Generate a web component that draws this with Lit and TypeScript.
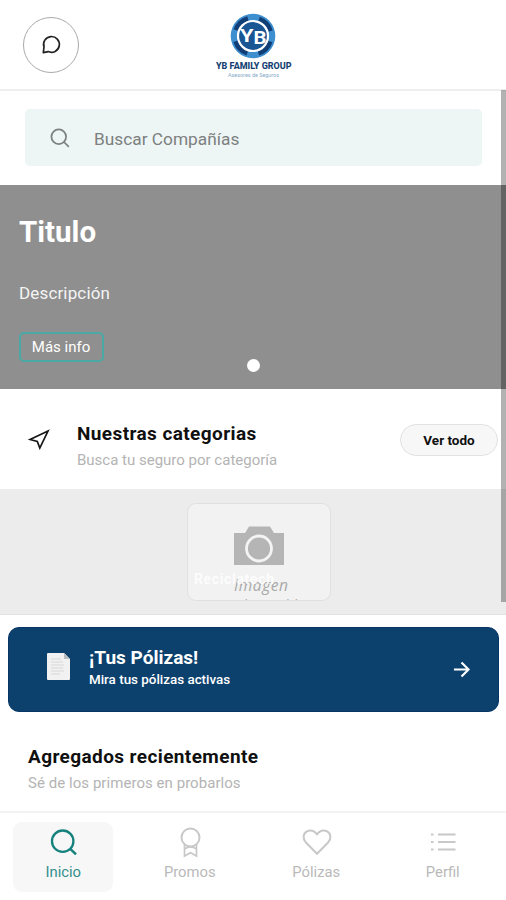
import { LitElement, html, css, svg } from "lit";
import { customElement, state } from "lit/decorators.js";
import { classMap } from "lit/directives/class-map.js";

const searchIcon = html`<svg viewBox="0 0 24 24" fill="none" stroke="currentColor" stroke-width="2.1">
  <circle cx="10.5" cy="10.5" r="8.8" /><path d="M16.8 16.8 L22.6 22.6" />
</svg>`;

const tabs = [
  { label: "Inicio", icon: svg`<circle cx="14.7" cy="14.2" r="10.7" stroke-width="2.3"/><path d="M22 21.700 L28 27.400" stroke-width="2.5"/>` },
  { label: "Promos", icon: svg`<circle cx="16.500" cy="10.500" r="9"/><path d="M10.500 18V29l6-3.200 6 3.200V18M10.500 22q6-4 12 0" stroke-width="1.700"/>` },
  { label: "Pólizas", icon: svg`<path d="M16 26.800 4.700 15.200C1.500 11.600 2.100 6.500 5.900 4.400 9.500 2.500 13.700 3.800 16 7.300 18.300 3.800 22.500 2.500 26.100 4.400 29.900 6.500 30.500 11.600 27.300 15.200Z"/>` },
  { label: "Perfil", icon: svg`<path d="M11 7.500h17.500M11 15h17.500M11 22.500h17.500" stroke-width="2"/><path d="M4 7.500h2.500M4 15h2.500M4 22.500h2.500" stroke-width="2"/>` },
];

@customElement("app-root")
export class AppRoot extends LitElement {
  @state() private active = "Inicio";

  static styles = css`
    :host {
      display: flex;
      flex-direction: column;
      position: relative;
      width: 506px;
      height: 900px;
      overflow: hidden;
      background: #fff;
      color: #101010;
      font-family: Roboto, sans-serif;
    }
    * { box-sizing: border-box; }
    svg { display: block; flex: none; }
    h1, h2, p { margin: 0; font-weight: 400; }
    button { font: inherit; padding: 0; margin: 0; color: inherit; background: none; border: 0; }
    header {
      display: grid;
      grid-template-columns: 1fr auto 1fr;
      align-items: center;
      flex: none;
      height: 91px;
      padding: 0 23px;
      border-bottom: 2px solid #eeeeee;
    }
    .chat {
      display: grid;
      place-items: center;
      width: 56px;
      height: 56px;
      border: 1px solid #aaa;
      border-radius: 50%;
    }
    .chat svg { width: 22px; height: 22px; }
    .logo { width: 80px; height: 70px; overflow: visible; }
    .search {
      display: flex;
      align-items: center;
      flex: none;
      gap: 24px;
      height: 57px;
      margin: 18px 24px 19px 25px;
      padding-left: 25px;
      border-radius: 5px;
      background: #eef5f5;
      color: #7c8080;
      font-size: 17.3px;
    }
    .search span { padding-top: 2px; }
    .search svg { width: 20px; height: 20px; }
    .hero {
      display: flex;
      flex-direction: column;
      align-items: flex-start;
      position: relative;
      flex: none;
      height: 204px;
      padding: 29px 19px 0;
      background: #8f8f8f;
      color: #fff;
    }
    .hero h1 { font-size: 29.5px; line-height: 36px; font-weight: 700; }
    .hero p { margin-top: 31px; font-size: 17px; line-height: 24px; letter-spacing: 0.15px; color: #f4f4f4; }
    .hero button {
      width: 85px;
      height: 30px;
      margin-top: 27px;
      padding-right: 1px;
      border: 2px solid #4aa9a5;
      border-radius: 5px;
      font-size: 15px;
    }
    .dot {
      position: absolute;
      left: 247px;
      bottom: 17px;
      width: 13px;
      height: 13px;
      border-radius: 50%;
      background: #fff;
    }
    .categories {
      display: flex;
      align-items: flex-start;
      flex: none;
      height: 100px;
      padding: 34px 8px 0 28px;
    }
    .categories > svg { width: 22px; height: 22px; margin: 5px 27px 0 0; }
    .heading { flex: 1; }
    h2 { font-size: 19px; line-height: 22px; font-weight: 700; }
    .heading h2, .recent h2 { letter-spacing: 0.4px; }
    .sub { font-size: 15px; line-height: 20px; margin-top: 5px; color: #b4b4b4; }
    .all {
      width: 98px;
      height: 32px;
      margin-top: 1px;
      border: 1px solid #e2e2e2;
      border-radius: 16px;
      background: #f7f7f7;
      font-size: 13.5px;
      font-weight: 700;
    }
    .strip {
      display: flex;
      justify-content: center;
      flex: none;
      height: 126px;
      padding: 14px 0 0 12px;
      border-bottom: 1px solid #e2e2e2;
      background: #ececec;
    }
    .thumb {
      width: 144px;
      height: 98px;
      border: 1px solid #e0e0e0;
      border-radius: 9px;
      background: #f2f2f2;
      overflow: hidden;
    }
    .banner {
      display: flex;
      align-items: center;
      flex: none;
      height: 85px;
      margin: 12px 7px 0 8px;
      padding: 0 28px 0 38px;
      border: 1px solid #063566;
      border-radius: 11px;
      background: #0c416e;
      color: #fff;
    }
    .doc { margin-bottom: 7px; }
    .banner .copy { flex: 1; padding: 0 0 3px 19px; }
    .banner h2 { line-height: 24px; }
    .banner p { font-size: 13.4px; line-height: 20px; font-weight: 500; }
    .recent { flex: 1; padding: 34px 28px 0; }
    .recent .sub { letter-spacing: 0.05px; }
    nav {
      display: grid;
      grid-template-columns: repeat(4, 1fr);
      flex: none;
      height: 89px;
      padding-top: 9px;
      border-top: 2px solid #f3f3f3;
    }
    .tab {
      display: flex;
      flex-direction: column;
      align-items: center;
      justify-self: center;
      gap: 4px;
      width: 100px;
      height: 70px;
      padding-top: 5px;
      border-radius: 9px;
      color: #c8c8c8;
      font-size: 14.8px;
      line-height: 20px;
    }
    .tab span { color: #b9b9b9; }
    .tab svg { width: 31px; height: 31px; }
    .tab.active { background: #f7f7f7; color: #16827d; }
    .tab.active span { color: #348f8b; }
    .scrollbar {
      position: absolute;
      right: 0;
      top: 90px;
      width: 5px;
      height: 512px;
      background: rgba(0, 0, 0, 0.3);
    }
  `;

  render() {
    return html`
      <header>
        <button class="chat" aria-label="Chat">
          <svg viewBox="0 0 22 22" fill="none" stroke="#222" stroke-width="1.700" stroke-linejoin="round">
            <path d="M3.300 18.600 4 13A7.900 7.900 0 1 1 8.200 17.600Z" />
          </svg>
        </button>
        <svg class="logo" viewBox="0 0 80 70" font-family="Roboto, sans-serif">
          <circle cx="40" cy="26" r="22.300" fill="#3d8fd0" />
          <circle cx="40" cy="26" r="18" fill="none" stroke="#123e78" stroke-width="5" stroke-dasharray="17 11.270" stroke-dashoffset="-5.600" />
          <circle cx="40" cy="26" r="15" fill="#1a5594" stroke="#fff" stroke-width="2.200" />
          <text x="27" y="31.500" font-size="19" font-weight="700" fill="#fff" textLength="13.500" lengthAdjust="spacingAndGlyphs">Y</text>
          <text x="40.500" y="33.500" font-size="19" font-weight="700" fill="#fff" textLength="13" lengthAdjust="spacingAndGlyphs">B</text>
          <text x="3" y="59" font-size="9.500" font-weight="800" fill="#143e72" textLength="75.500" lengthAdjust="spacingAndGlyphs">YB FAMILY GROUP</text>
          <text x="15" y="67" font-size="5.500" fill="#86aac8" textLength="51" lengthAdjust="spacingAndGlyphs">Asesores de Seguros</text>
        </svg>
      </header>
      <div class="search">${searchIcon}<span>Buscar Compañías</span></div>
      <section class="hero">
        <h1>Titulo</h1>
        <p>Descripción</p>
        <button>Más info</button>
        <i class="dot"></i>
      </section>
      <section class="categories">
        <svg viewBox="0 0 22 22" fill="none" stroke="#161616" stroke-width="1.700">
          <path d="M2 11.500 20 3 11.800 20 9.300 13.400Z" />
        </svg>
        <div class="heading">
          <h2>Nuestras categorias</h2>
          <p class="sub">Busca tu seguro por categoría</p>
        </div>
        <button class="all">Ver todo</button>
      </section>
      <section class="strip">
        <div class="thumb">
          <svg width="142" height="96" viewBox="0 0 142 96" font-family="'Open Sans', sans-serif">
            <path d="M46 29H57L61 22.500H82L86 29H96V61H46Z" fill="#b5b5b5" />
            <circle cx="71" cy="44.500" r="12.500" fill="#b5b5b5" stroke="#f4f4f4" stroke-width="2.800" />
            <text x="46" y="87" font-size="15.500" font-style="italic" fill="#a9a9a9" textLength="54">Imagen</text>
            <text x="50" y="105.500" font-size="15" font-style="italic" fill="#b0b0b0" textLength="66">disponible</text>
            <text x="6" y="80" font-size="14" font-weight="600" fill="#fff" opacity=".85" font-family="Roboto, sans-serif" textLength="80">Reciclatech</text>
          </svg>
        </div>
      </section>
      <section class="banner">
        <svg class="doc" width="23" height="27" viewBox="0 0 23 27">
          <path d="M1 0H17L23 6V26Q23 27 22 27H1Q0 27 0 26V1Q0 0 1 0Z" fill="#f1f1f1" />
          <path d="M17 0V6H23Z" fill="#b9bec3" />
          <path d="M4 6h10M4 9h12M4 12h13M4 15h12M4 18h13M4 21h9" stroke="#d8d8d8" stroke-width="1" />
        </svg>
        <div class="copy">
          <h2>¡Tus Pólizas!</h2>
          <p>Mira tus pólizas activas</p>
        </div>
        <svg width="17" height="17" viewBox="0 0 18 18" fill="none" stroke="#fff" stroke-width="2.300">
          <path d="M1 9H16M9 1.500 16.500 9 9 16.500" />
        </svg>
      </section>
      <section class="recent">
        <h2>Agregados recientemente</h2>
        <p class="sub">Sé de los primeros en probarlos</p>
      </section>
      <nav>
        ${tabs.map(
          (t) => html`<button
            class=${classMap({ tab: true, active: t.label === this.active })}
            @click=${() => (this.active = t.label)}
          >
            <svg viewBox="0 0 31 31" fill="none" stroke="currentColor" stroke-width="2">${t.icon}</svg>
            <span>${t.label}</span>
          </button>`
        )}
      </nav>
      <i class="scrollbar"></i>
    `;
  }
}
